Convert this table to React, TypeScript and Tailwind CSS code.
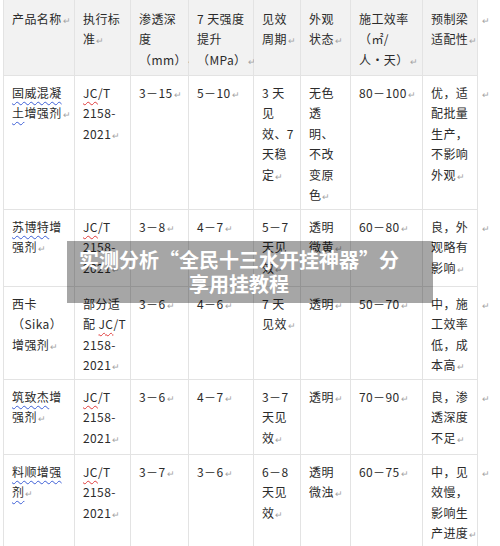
import type { ReactNode } from 'react';

const Mark = () => (
  <span className="ml-[1px] text-[9px] tracking-normal text-[#a3a3a3]">↵</span>
);

const Blue = ({ children }: { children: ReactNode }) => (
  <span className="underline decoration-wavy decoration-[#3d5fd6] decoration-1 underline-offset-[3px]">
    {children}
  </span>
);

const Red = ({ children }: { children: ReactNode }) => (
  <span className="underline decoration-wavy decoration-[#e03b3b] decoration-1 underline-offset-[3px]">
    {children}
  </span>
);

type Line = ReactNode;

const header: Line[][] = [
  ['产品名称'],
  ['执行标', '准'],
  ['渗透深', '度', '（mm）'],
  ['7 天强度', '提升', '（MPa）'],
  ['见效', '周期'],
  ['外观', '状态'],
  ['施工效率', '（㎡/', '人・天）'],
  ['预制梁', '适配性'],
];

const jc = (
  <>
    <Red>JC</Red>/T
  </>
);

const rows: { h: string; cells: Line[][] }[] = [
  {
    h: 'h-[134px]',
    cells: [
      [<Blue>固威混凝</Blue>, <><Blue>土</Blue>增强剂</>],
      [jc, '2158-', '2021'],
      ['3－15'],
      ['5－10'],
      ['3 天', '见', '效、7', '天稳', '定'],
      ['无色', '透', '明、', '不改', '变原', '色'],
      ['80－100'],
      ['优，适', '配批量', '生产，', '不影响', '外观'],
    ],
  },
  {
    h: 'h-[77px]',
    cells: [
      [<><Blue>苏博特</Blue>增</>, '强剂'],
      [jc, '2158-', '2021'],
      ['3－8'],
      ['4－7'],
      ['5－7', '天见', '效'],
      ['透明', '微黄'],
      ['60－80'],
      ['良，外', '观略有', '影响'],
    ],
  },
  {
    h: 'h-[93px]',
    cells: [
      ['西卡', '（Sika）', '增强剂'],
      ['部分适', <>配 {jc}</>, '2158-', '2021'],
      ['3－6'],
      ['4－6'],
      ['7 天', '见效'],
      ['透明'],
      ['50－70'],
      ['中，施', '工效率', '低，成', '本高'],
    ],
  },
  {
    h: 'h-[75px]',
    cells: [
      [<><Blue>筑致杰</Blue>增</>, '强剂'],
      [jc, '2158-', '2021'],
      ['3－6'],
      ['4－7'],
      ['3－7', '天见', '效'],
      ['透明'],
      ['70－90'],
      ['良，渗', '透深度', '不足'],
    ],
  },
  {
    h: 'h-[120px]',
    cells: [
      [<Blue>料顺增强</Blue>, <Blue>剂</Blue>],
      [jc, '2158-', '2021'],
      ['3－7'],
      ['3－6'],
      ['6－8', '天见', '效'],
      ['透明', '微浊'],
      ['60－75'],
      ['中，见', '效慢，', '影响生', '产进度'],
    ],
  },
];

function Cell({ lines, className }: { lines: Line[]; className: string }) {
  return (
    <div className={`border-r border-b border-[#e3e3e3] pl-[8px] leading-[20.4px] whitespace-nowrap ${className}`}>
      {lines.map((l, i) => (
        <div key={i}>
          {l}
          {i === lines.length - 1 && <Mark />}
        </div>
      ))}
    </div>
  );
}

export default function App() {
  return (
    <div className="relative h-[546px] w-[500px] overflow-hidden bg-white font-['Noto_Sans_CJK_SC',sans-serif] text-[12px] tracking-[0.4px] text-[#2b2b2b]">
      <div className="pl-[3px]">
        <div className="grid grid-cols-[71px_56px_58px_65px_47px_50px_72px_55px_1fr] border-l border-[#e3e3e3]">
          {header.map((lines, i) => (
            <Cell key={i} lines={lines} className="h-[76px] bg-[#f2f2f2] pt-[9px]" />
          ))}
          <div className="pl-[3px] pt-[9px] leading-[20.4px]">
            <Mark />
          </div>
          {rows.map((row, r) => (
            <div key={r} className="contents">
              {row.cells.map((lines, i) => (
                <Cell key={i} lines={lines} className={`${row.h} pt-[7px]`} />
              ))}
              <div className="pl-[3px] pt-[7px] leading-[20.4px]">
                <Mark />
              </div>
            </div>
          ))}
        </div>
      </div>

      <div className="absolute top-[241px] left-[67px] flex h-[62px] w-[366px] items-center justify-center bg-black/35 pr-[22px]">
        <p className="text-center text-[20px] leading-[24px] font-bold tracking-normal text-white">
          实测分析“全民十三水开挂神器”分
          <br />
          享用挂教程
        </p>
      </div>
    </div>
  );
}
